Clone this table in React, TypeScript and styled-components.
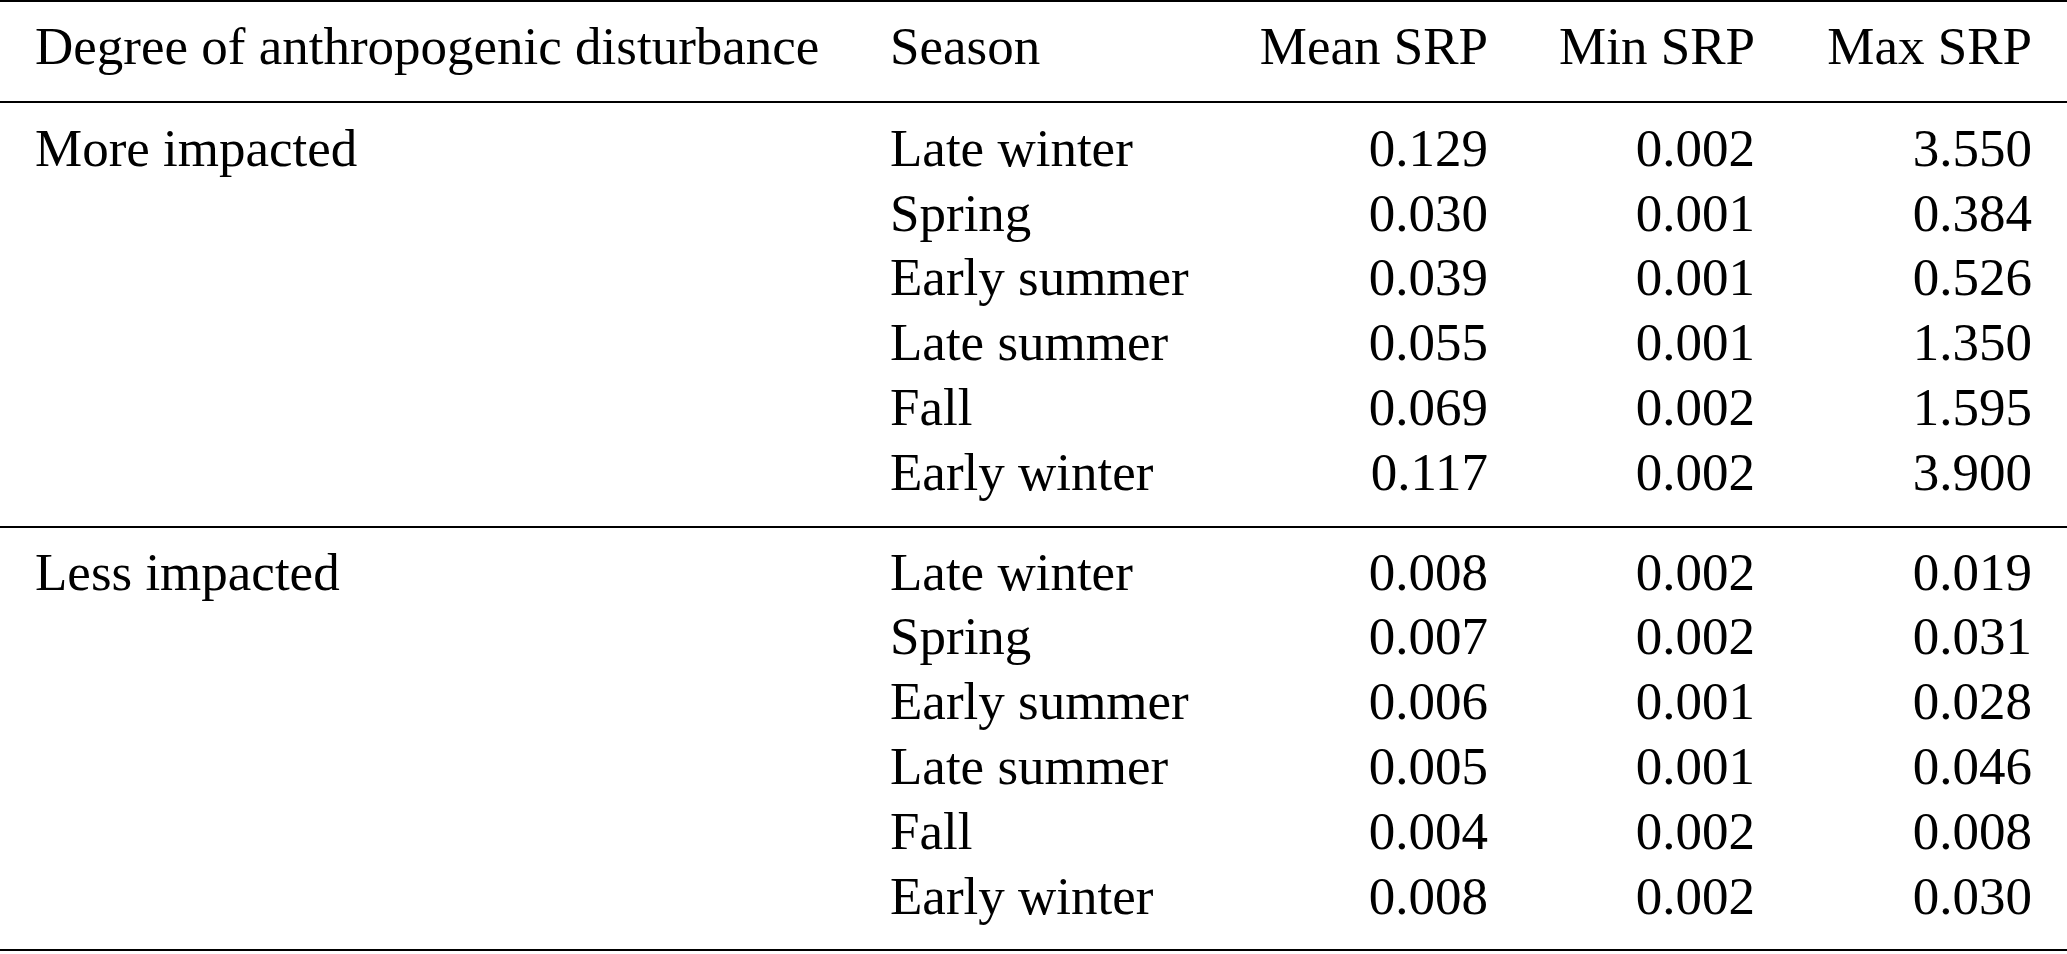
import React from "react";
import styled, { createGlobalStyle, css } from "styled-components";

const GlobalStyle = createGlobalStyle`
  html, body {
    margin: 0;
    padding: 0;
    background: #ffffff;
  }
  body {
    font-family: "Liberation Serif", "Times New Roman", serif;
    color: #000000;
  }
`;

const Table = styled.table`
  width: 2067px;
  table-layout: fixed;
  border-collapse: separate;
  border-spacing: 0;
  font-family: "Liberation Serif", "Times New Roman", serif;
  font-size: 53px;
  line-height: 64.8px;
  color: #000;
`;

type Align = "left" | "right";

const cellBase = css<{ $align: Align }>`
  padding-left: 35px;
  padding-right: 35px;
  text-align: ${(p) => p.$align};
  white-space: nowrap;
  vertical-align: top;
  font-weight: 400;
`;

const HeadCell = styled.th<{ $align: Align }>`
  ${cellBase};
  padding-top: 12px;
  padding-bottom: 22px;
  border-top: 2px solid #000;
  border-bottom: 2px solid #000;
`;

const BodyCell = styled.td<{
  $align: Align;
  $padTop: number;
  $padBottom: number;
  $ruled: boolean;
}>`
  ${cellBase};
  padding-top: ${(p) => p.$padTop}px;
  padding-bottom: ${(p) => p.$padBottom}px;
  border-bottom: ${(p) => (p.$ruled ? "2px solid #000" : "none")};
`;

type Row = [string, string, string, string];

const groups: { label: string; rows: Row[] }[] = [
  {
    label: "More impacted",
    rows: [
      ["Late winter", "0.129", "0.002", "3.550"],
      ["Spring", "0.030", "0.001", "0.384"],
      ["Early summer", "0.039", "0.001", "0.526"],
      ["Late summer", "0.055", "0.001", "1.350"],
      ["Fall", "0.069", "0.002", "1.595"],
      ["Early winter", "0.117", "0.002", "3.900"],
    ],
  },
  {
    label: "Less impacted",
    rows: [
      ["Late winter", "0.008", "0.002", "0.019"],
      ["Spring", "0.007", "0.002", "0.031"],
      ["Early summer", "0.006", "0.001", "0.028"],
      ["Late summer", "0.005", "0.001", "0.046"],
      ["Fall", "0.004", "0.002", "0.008"],
      ["Early winter", "0.008", "0.002", "0.030"],
    ],
  },
];

const columnWidths = [855, 368, 300, 267, 277];
const headers: { text: string; align: Align }[] = [
  { text: "Degree of anthropogenic disturbance", align: "left" },
  { text: "Season", align: "left" },
  { text: "Mean SRP", align: "right" },
  { text: "Min SRP", align: "right" },
  { text: "Max SRP", align: "right" },
];

export default function App() {
  return (
    <>
      <GlobalStyle />
      <Table>
        <colgroup>
          {columnWidths.map((w, i) => (
            <col key={i} style={{ width: `${w}px` }} />
          ))}
        </colgroup>
        <thead>
          <tr>
            {headers.map((h) => (
              <HeadCell key={h.text} $align={h.align}>
                {h.text}
              </HeadCell>
            ))}
          </tr>
        </thead>
        {groups.map((g, gi) => (
          <tbody key={g.label}>
            {g.rows.map((r, ri) => {
              const first = ri === 0;
              const last = ri === g.rows.length - 1;
              const padTop = first ? (gi === 0 ? 13 : 12) : 0;
              const padBottom = last ? 21 : 0;
              const cells: { text: string; align: Align }[] = [
                { text: first ? g.label : "", align: "left" },
                { text: r[0], align: "left" },
                { text: r[1], align: "right" },
                { text: r[2], align: "right" },
                { text: r[3], align: "right" },
              ];
              return (
                <tr key={ri}>
                  {cells.map((c, ci) => (
                    <BodyCell
                      key={ci}
                      $align={c.align}
                      $padTop={padTop}
                      $padBottom={padBottom}
                      $ruled={last}
                    >
                      {c.text}
                    </BodyCell>
                  ))}
                </tr>
              );
            })}
          </tbody>
        ))}
      </Table>
    </>
  );
}
